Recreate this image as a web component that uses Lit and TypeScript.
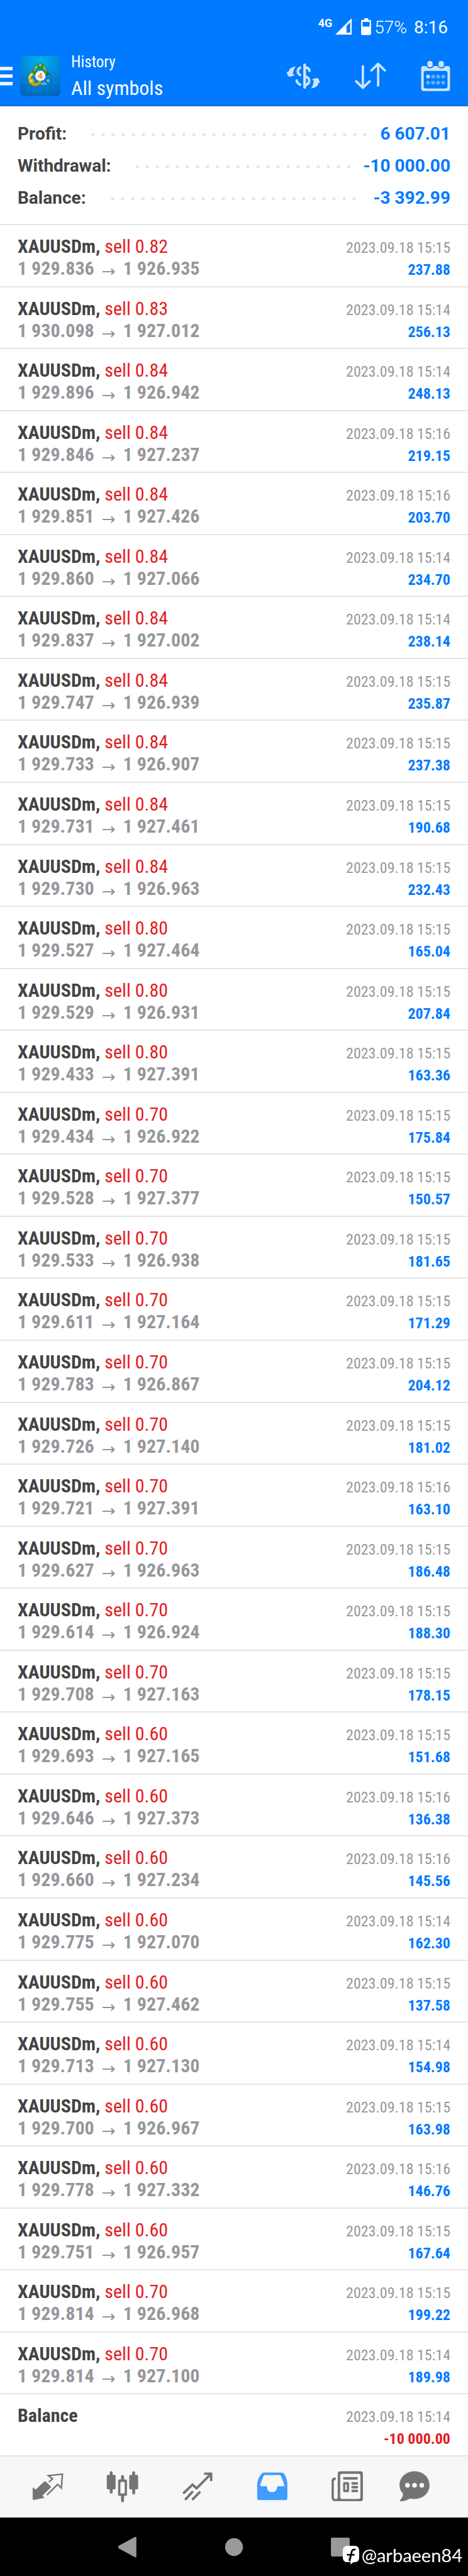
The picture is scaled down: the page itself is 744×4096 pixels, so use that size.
import { LitElement, html, css, svg } from "lit";
import { customElement, property } from "lit/decorators.js";

interface Deal {
  volume: string;
  open: string;
  close: string;
  time: string;
  profit: string;
}

const DEALS: Deal[] = `
0.82 929.836 926.935 15 237.88
0.83 930.098 927.012 14 256.13
0.84 929.896 926.942 14 248.13
0.84 929.846 927.237 16 219.15
0.84 929.851 927.426 16 203.70
0.84 929.860 927.066 14 234.70
0.84 929.837 927.002 14 238.14
0.84 929.747 926.939 15 235.87
0.84 929.733 926.907 15 237.38
0.84 929.731 927.461 15 190.68
0.84 929.730 926.963 15 232.43
0.80 929.527 927.464 15 165.04
0.80 929.529 926.931 15 207.84
0.80 929.433 927.391 15 163.36
0.70 929.434 926.922 15 175.84
0.70 929.528 927.377 15 150.57
0.70 929.533 926.938 15 181.65
0.70 929.611 927.164 15 171.29
0.70 929.783 926.867 15 204.12
0.70 929.726 927.140 15 181.02
0.70 929.721 927.391 16 163.10
0.70 929.627 926.963 15 186.48
0.70 929.614 926.924 15 188.30
0.70 929.708 927.163 15 178.15
0.60 929.693 927.165 15 151.68
0.60 929.646 927.373 16 136.38
0.60 929.660 927.234 16 145.56
0.60 929.775 927.070 14 162.30
0.60 929.755 927.462 15 137.58
0.60 929.713 927.130 14 154.98
0.60 929.700 926.967 15 163.98
0.60 929.778 927.332 16 146.76
0.60 929.751 926.957 15 167.64
0.70 929.814 926.968 15 199.22
0.70 929.814 927.100 14 189.98`
  .trim()
  .split("\n")
  .map((line) => {
    const [volume, open, close, minute, profit] = line.split(" ");
    return { volume, open: `1 ${open}`, close: `1 ${close}`, time: `2023.09.18 15:${minute}`, profit };
  });

const SUMMARY = [
  { label: "Profit:", value: "6 607.01" },
  { label: "Withdrawal:", value: "-10 000.00" },
  { label: "Balance:", value: "-3 392.99" },
];

const appLogo = html`<svg class="logo" viewBox="0 0 88 88" role="img" aria-label="MetaTrader 4">
  <defs>
    <radialGradient id="bg" cx=".5" cy=".12" r=".95">
      <stop offset="0" stop-color="#00b2ea" /><stop offset=".5" stop-color="#0188db" /><stop offset="1" stop-color="#0062b8" />
    </radialGradient>
    <linearGradient id="gr" x2="0" y2="1"><stop offset="0" stop-color="#8fd07a" /><stop offset="1" stop-color="#237f22" /></linearGradient>
    <linearGradient id="ye" x2="1" y2="1"><stop offset="0" stop-color="#f3ec4e" /><stop offset="1" stop-color="#b39a16" /></linearGradient>
    <linearGradient id="bl" x2="0" y2="1"><stop offset="0" stop-color="#1573b8" /><stop offset="1" stop-color="#3fb4ee" /></linearGradient>
  </defs>
  <rect width="88" height="88" rx="9" fill="url(#bg)" />
  <path d="M15 0v88M29.500 0v88M44 0v88M59 0v88M73.500 0v88M0 14.500h88M0 29.500h88M0 44h88M0 58.500h88M0 73.500h88" stroke="#5cc8ff" stroke-opacity=".22" stroke-width=".7" />
  <g fill="none" stroke-linecap="round">
    <path d="M53 58c7 3 13-3 12-10-1-5-4-8-7-9M41 53c3 9 13 11 20 5" stroke="#0b4f86" stroke-width="7.500" />
    <path d="M53 58c7 3 13-3 12-10-1-5-4-8-7-9M41 53c3 9 13 11 20 5" stroke="url(#bl)" stroke-width="5.500" />
    <path d="M33 38c-8 0-13 5-12 14M26 60c5 4 13 4 17-3" stroke="#6f6a12" stroke-width="7.500" />
    <path d="M33 38c-8 0-13 5-12 14M26 60c5 4 13 4 17-3" stroke="url(#ye)" stroke-width="5.500" />
    <path d="M31 37c-1-9 4-15 12-15 9 0 15 7 13 18" stroke="#1c5f22" stroke-width="7.500" />
    <path d="M31 37c-1-9 4-15 12-15 9 0 15 7 13 18" stroke="url(#gr)" stroke-width="5.500" />
  </g>
  <ellipse cx="44.500" cy="22.500" rx="5.500" ry="7" fill="#2d8f2a" stroke="#1c5f22" />
  <ellipse cx="44" cy="19.500" rx="3" ry="3" fill="#a5dd95" opacity=".7" />
  <circle cx="25" cy="55.500" r="6.500" fill="#c5b725" stroke="#6f6a12" />
  <circle cx="23.500" cy="53.500" r="2.500" fill="#f6f2a0" opacity=".8" />
  <circle cx="62.500" cy="55.500" r="6.500" fill="#1c86c9" stroke="#0b4f86" />
  <circle cx="61" cy="53.500" r="2.500" fill="#a5dcfa" opacity=".8" />
  <circle cx="44.300" cy="43.500" r="11.200" fill="#f1f1f3" />
  <text x="44" y="50" text-anchor="middle" font-family="Open Sans, sans-serif" font-size="18" font-weight="700" fill="#f58a2b">4</text>
</svg>`;

/* Tab icons share a 72-unit square. */
const TABS = [
  {
    name: "Quotes",
    shape: svg`<path d="M28.500 25q1.300-1.200 2.600 0L42 35.200q1.200 1.300 0 2.600L23.500 55.800l4.700 4.400-23 4.600q-2 0-2-2V38.200l6 4.600z" stroke="currentColor" stroke-linejoin="round"/>
      <path d="M38.200 25.800l8.300-7-9.300-7.300 31-3-2.400 30.700-8-8.400-23.600 23.400" fill="none" stroke="currentColor" stroke-width="3.300"/>`,
  },
  {
    name: "Charts",
    shape: svg`<rect x="7.500" y="2" width="6.500" height="49" rx="3"/><rect x="1" y="10" width="19.500" height="32" rx="2.500"/>
      <rect x="57" y="2" width="6.500" height="51" rx="3"/><rect x="50.500" y="10" width="19.500" height="32" rx="2.500"/>
      <path d="M32.500 20v-6.500a3 3 0 0 1 6.500 0V20h4a2.500 2.500 0 0 1 2.500 2.500v31A2.500 2.500 0 0 1 43 56h-4v11a3 3 0 0 1-6.500 0V56h-4a2.500 2.500 0 0 1-2.500-2.500v-31a2.500 2.500 0 0 1 2.500-2.500zM33 25.500a2 2 0 0 0-2 2v21.500a2 2 0 0 0 2 2h5.500a2 2 0 0 0 2-2V27.500a2 2 0 0 0-2-2z" fill-rule="evenodd"/>`,
  },
  {
    name: "Trade",
    shape: svg`<g fill="none" stroke="currentColor" stroke-width="5.300" stroke-linecap="round" stroke-linejoin="round">
      <path d="M6 49.500L25 31.500l9 8L63.500 10M52.500 7.500h13.500v14" stroke-linejoin="miter"/></g>
      <g fill="none" stroke="currentColor" stroke-width="5.300"><path d="M9 64.500L26 46M24.500 64.500L42 47"/></g>
      <circle cx="10.500" cy="63" r="2.700"/><circle cx="26" cy="63" r="2.700"/>`,
  },
  {
    name: "History",
    active: true,
    shape: svg`<path d="M17 5h39.500q4 0 6 3.500Q69 19 69 32v28.500a5 5 0 0 1-5 5H7.500a5 5 0 0 1-5-5V32Q3 19 11 8.500 13.500 5 17 5zM20.500 10.500q-3 0-4.500 3L9.500 31q-.7 4 2.500 4h12v2a11.200 11.200 0 0 0 22.500 0v-2h13q3.500 0 2.500-4L55.500 13.500q-1-3-4.500-3z" fill-rule="evenodd"/>`,
  },
  {
    name: "News",
    shape: svg`<path d="M20 2h45a5.500 5.500 0 0 1 5.500 5.500V62.500A5.500 5.500 0 0 1 65 68H9a7.500 7.500 0 0 1-7.500-7.500V22.500a6.500 6.500 0 0 1 6.500-6.500h3l-.5 5q-4 0-4 4v34q0 4 3.500 4h2q3 0 3-4V7.500A5.500 5.500 0 0 1 20 2zM25 7.500q-4.500 0-4.500 4.500v46.500q0 4.500 4.500 4.500h35.500q4.500 0 4.500-4.500V12q0-4.500-4.500-4.500z" fill-rule="evenodd"/>
      <rect x="26.500" y="15" width="33" height="5.500" rx="2.700"/>
      <path d="M29.500 26h8a2.500 2.500 0 0 1 2.500 2.500v17a2.500 2.500 0 0 1-2.500 2.500h-8a2.500 2.500 0 0 1-2.500-2.500v-17a2.500 2.500 0 0 1 2.500-2.500zM31.500 31v12h3.500V31z" fill-rule="evenodd"/>
      <rect x="45" y="26" width="15" height="5.500" rx="2.700"/><rect x="45" y="34.300" width="15" height="5.500" rx="2.700"/><rect x="45" y="42.500" width="15" height="5.500" rx="2.700"/>`,
  },
  {
    name: "Messages",
    shape: svg`<path d="M36 2c18.500 0 33 13 33 30.500S54.500 63 36 63q-5 0-10-1.200Q14 68.500 5 68q-2-.2-1-1.800 7-7 6.500-15.200Q3 43.500 3 32.500C3 15 17.500 2 36 2z"/>
      <g fill="#f7f7f7"><circle cx="20.500" cy="33" r="5.200"/><circle cx="36" cy="33" r="5.200"/><circle cx="52" cy="33" r="5.200"/></g>`,
  },
];

@customElement("deal-row")
class DealRow extends LitElement {
  @property({ attribute: false }) deal?: Deal;

  static styles = css`
    :host {
      display: grid;
      grid-template-columns: 1fr auto;
      align-content: start;
      box-sizing: border-box;
      padding: 16px 28px 0;
      border-bottom: 2px solid #e4e4e4;
      line-height: 35px;
      font-size: 30px;
      white-space: nowrap;
    }
    .line {
      grid-column: 1 / -1;
      display: flex;
      align-items: baseline;
      justify-content: space-between;
      height: 35px;
    }
    .symbol { font-weight: 700; color: #444; }
    .volume { color: #e41b1e; }
    .prices { font-weight: 700; color: #96979b; }
    .arrow { display: inline-block; width: 20px; height: 10px; margin: 0 13px; }
    .time, .amount { font-size: 24px; }
    .time { color: #96979b; }
    .amount { font-weight: 700; color: #007aff; }
    .loss { color: #e41b1e; }
  `;

  render() {
    const d = this.deal;
    if (!d) {
      return html`<div class="line"><span class="symbol">Balance</span><time class="time">2023.09.18 15:14</time></div>
        <div class="line"><span>&nbsp;</span><span class="amount loss">-10 000.00</span></div>`;
    }
    return html`<div class="line">
        <span><span class="symbol">XAUUSDm,</span> <span class="volume">sell ${d.volume}</span></span>
        <time class="time">${d.time}</time>
      </div>
      <div class="line">
        <span class="prices">${d.open}<svg class="arrow" viewBox="0 0 20 10" role="img" aria-label="to"><path d="M0 4h15l-2-4h2l5 5-5 5h-2l2-4H0z" fill="currentColor" /></svg>${d.close}</span>
        <span class="amount">${d.profit}</span>
      </div>`;
  }
}

@customElement("app-root")
class AppRoot extends LitElement {
  static styles = css`
    :host {
      display: flex;
      flex-direction: column;
      min-height: 100vh;
      background: #fff;
      font-family: "Roboto Condensed", Roboto, sans-serif;
    }
    button {
      display: grid;
      place-items: center;
      padding: 0;
      border: 0;
      background: none;
      color: inherit;
      cursor: pointer;
    }
    svg { display: block; }
    .header {
      background: #007aff;
      color: #fff;
      border-bottom: 2px solid #006ce6;
    }
    .status {
      display: flex;
      justify-content: flex-end;
      align-items: flex-start;
      height: 46px;
      padding: 28px 32px 0 0;
      font-family: Roboto, sans-serif;
      font-size: 28px;
      line-height: 32px;
    }
    .network { font-size: 18px; line-height: 18px; font-weight: 700; }
    .signal { width: 26px; height: 26px; margin: 1px 15px 0 5px; }
    .battery { width: 16px; height: 27px; margin: 1px 5px 0 0; }
    .percent { font-weight: 300; margin-right: 11px; }
    .toolbar {
      display: flex;
      align-items: center;
      height: 93px;
    }
    .menu { width: 20px; height: 30px; margin-right: 12px; }
    .logo { width: 64px; height: 64px; margin-right: 17px; }
    .titles { flex: 1; min-width: 0; }
    .section { margin: 0; font-size: 25px; line-height: 38px; font-weight: 400; }
    .filter { margin: 0; font-size: 32px; line-height: 44px; font-weight: 400; }
    .tools { display: flex; align-items: center; gap: 55px; padding-right: 28px; color: #cce4ff; }
    .currency { width: 53px; height: 42px; }
    .sort { width: 50px; height: 43px; }
    .calendar { width: 47px; height: 48px; }
    .summary {
      padding: 18px 28px 16px;
      border-bottom: 2px solid #e4e4e4;
    }
    .total {
      display: flex;
      align-items: center;
      height: 51px;
      font-family: Roboto, sans-serif;
      font-size: 28px;
      font-weight: 700;
    }
    .label { color: #444; }
    .leader {
      flex: 1;
      height: 6px;
      margin: 3px 20px 0 39px;
      background: radial-gradient(circle at 3px 3px, #e4e4e4 2px, transparent 3px) 0 0 / 16px 6px repeat-x;
    }
    .value { color: #007aff; }
    .deals {
      flex: 1;
      display: grid;
      grid-auto-rows: 1fr;
    }
    .tabs {
      display: grid;
      grid-template-columns: repeat(5, 119fr) 96fr;
      height: 95px;
      padding: 0 37px 2px 16px;
      background: #f7f7f7;
      color: #747474;
    }
    .tabicon { width: 52px; height: 52px; }
    .active { color: #409cff; }
    .navigation {
      position: relative;
      display: grid;
      grid-template-columns: repeat(3, 1fr);
      height: 93px;
      padding: 0 16%;
      background: #000;
      color: #999;
    }
    .key { width: 32px; height: 34px; }
    .handle {
      position: absolute;
      right: 9px;
      bottom: 13px;
      display: flex;
      align-items: center;
      gap: 4px;
      color: #fff;
      font-family: Lato, sans-serif;
      font-size: 29px;
      line-height: 40px;
    }
    .badge { width: 26px; height: 30px; }
  `;

  render() {
    return html`
      <header class="header">
        <div class="status">
          <span class="network">4G</span>
          <svg class="signal" viewBox="0 0 35 35"><path d="M35 0v35H0zM32 8.500l-8 8V31h8z" fill="#fff" fill-rule="evenodd" /></svg>
          <svg class="battery" viewBox="0 0 21 36"><path d="M6.500 0h8.500v3.500h3.500a2.500 2.500 0 0 1 2.500 2.500v27a2.500 2.500 0 0 1-2.500 2.500h-16a2.500 2.500 0 0 1-2.500-2.500V6a2.500 2.500 0 0 1 2.500-2.500h4zM3 7.500v10h15v-10z" fill="#fff" fill-rule="evenodd" /></svg>
          <span class="percent">57%</span><span>8:16</span>
        </div>
        <div class="toolbar">
          <button class="menu" aria-label="Menu"><svg width="20" height="30" viewBox="0 0 28 41"><path d="M0 0h28v7.500H0zM0 16.700h28v7.500H0zM0 33.500h28V41H0z" fill="#f0f7ff" /></svg></button>
          ${appLogo}
          <div class="titles">
            <h1 class="section">History</h1>
            <p class="filter">All symbols</p>
          </div>
          <div class="tools">
            <button aria-label="Currency"><svg class="currency" viewBox="0 0 73 57">
              <path d="M20 7Q5 9 3 20l-3-2q0 7 4.500 12 7 0 13-4l-4.500-1.500Q14 13 20 7zM53 55.500q15-2 16.500-13l2.500 2q0-8-4.500-12-7 0-13 3.500l4.500 2Q58 49 53 55.500z" fill="currentColor" />
              <path d="M31 9.500Q24 12 24 18t7 9M21.500 38.500q1 6 9.500 10M40 9.500q8 0 10 7.500M40 29q9 2.500 9 10 0 7-9 9.500" fill="none" stroke="currentColor" stroke-width="5.500" />
              <rect x="36" y="1" width="6" height="55" rx="2.500" fill="currentColor" />
              <circle cx="49.500" cy="17.500" r="2.400" fill="currentColor" /><circle cx="21.500" cy="38" r="2.500" fill="currentColor" />
            </svg></button>
            <button aria-label="Sort"><svg class="sort" viewBox="0 0 68 58" fill="none" stroke="currentColor" stroke-width="5" stroke-linecap="round" stroke-linejoin="round"><path d="M17.500 8.500v46M3 41l14.500 14L32 41M50.500 50V3M36 17.500L50.500 3 65 17.500" /></svg></button>
            <button aria-label="Calendar"><svg class="calendar" viewBox="0 0 63 66">
              <path d="M5 11h6q2 5 8 5 7 0 8-5h9q2 5 8 5 7 0 8-5h6a5 5 0 0 1 5 5v44.500a5 5 0 0 1-5 5H5a5 5 0 0 1-5-5V16a5 5 0 0 1 5-5zM10 21.500a4.500 4.500 0 0 0-4.500 4.500v29.500A4.500 4.500 0 0 0 10 60h43a4.500 4.500 0 0 0 4.500-4.500V26a4.500 4.500 0 0 0-4.500-4.500z" fill="currentColor" fill-rule="evenodd" />
              <rect x="13.500" y="0" width="11.500" height="13.500" rx="5" fill="currentColor" /><rect x="38" y="0" width="11.500" height="13.500" rx="5" fill="currentColor" />
              <circle cx="15" cy="34" r="4.200" fill="currentColor" />
              <g fill="#66afff"><circle cx="26" cy="34" r="4.200" /><circle cx="37" cy="34" r="4.200" /><circle cx="48" cy="34" r="4.200" /><circle cx="15" cy="47.500" r="4.200" /><circle cx="26" cy="47.500" r="4.200" /><circle cx="37" cy="47.500" r="4.200" /><circle cx="48" cy="47.500" r="4.200" /></g>
            </svg></button>
          </div>
        </div>
      </header>
      <section class="summary" aria-label="Totals">
        ${SUMMARY.map((s) => html`<div class="total"><span class="label">${s.label}</span><span class="leader"></span><span class="value">${s.value}</span></div>`)}
      </section>
      <main class="deals">
        ${DEALS.map((d) => html`<deal-row .deal=${d}></deal-row>`)}
        <deal-row></deal-row>
      </main>
      <nav class="tabs" aria-label="Sections">
        ${TABS.map((t) => html`<button class=${t.active ? "active" : ""} aria-label=${t.name}><svg class="tabicon" viewBox="0 0 72 72" fill="currentColor">${t.shape}</svg></button>`)}
      </nav>
      <nav class="navigation" aria-label="System">
        <button aria-label="Back"><svg class="key" viewBox="0 0 44 46" fill="currentColor"><path d="M3 20L37.500 1q3.500-1.500 3.500 2v40q0 3.500-3.500 2L3 26q-4-3 0-6z" /></svg></button>
        <button aria-label="Home"><svg class="key" viewBox="0 0 44 46" fill="currentColor"><circle cx="22" cy="23" r="19.500" /></svg></button>
        <button aria-label="Recent apps"><svg class="key" viewBox="0 0 44 46" fill="currentColor"><rect x="1.500" y="2.500" width="41" height="41" rx="3" /></svg></button>
        <div class="handle">
          <svg class="badge" viewBox="0 0 34 39">
            <path d="M10 0h14q10 0 10 10v14q0 9-9 10l-4 .5-5 4.500.5-5H10Q0 34 0 24V10Q0 0 10 0z" fill="#fff" />
            <path d="M26.500 8q-6-1.500-8 4l-4.500 20M8.500 18.500h16" fill="none" stroke="#000" stroke-width="3.500" />
            <path d="M11 30l2.500-9" stroke="#999" stroke-width="1.500" />
          </svg>
          <span>@arbaeen84</span>
        </div>
      </nav>
    `;
  }
}
